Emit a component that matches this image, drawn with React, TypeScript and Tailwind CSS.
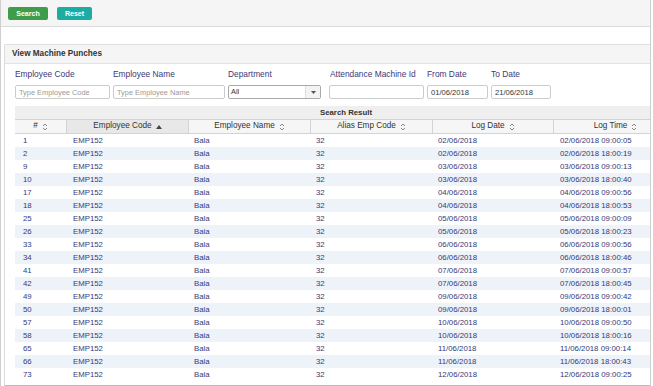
import React from 'react';

interface PunchRow {
    id: number;
    logDate: string;
    logTime: string;
}

const rows: PunchRow[] = [
    { id: 1, logDate: '02/06/2018', logTime: '09:00:05' },
    { id: 2, logDate: '02/06/2018', logTime: '18:00:19' },
    { id: 9, logDate: '03/06/2018', logTime: '09:00:13' },
    { id: 10, logDate: '03/06/2018', logTime: '18:00:40' },
    { id: 17, logDate: '04/06/2018', logTime: '09:00:56' },
    { id: 18, logDate: '04/06/2018', logTime: '18:00:53' },
    { id: 25, logDate: '05/06/2018', logTime: '09:00:09' },
    { id: 26, logDate: '05/06/2018', logTime: '18:00:23' },
    { id: 33, logDate: '06/06/2018', logTime: '09:00:56' },
    { id: 34, logDate: '06/06/2018', logTime: '18:00:46' },
    { id: 41, logDate: '07/06/2018', logTime: '09:00:57' },
    { id: 42, logDate: '07/06/2018', logTime: '18:00:45' },
    { id: 49, logDate: '09/06/2018', logTime: '09:00:42' },
    { id: 50, logDate: '09/06/2018', logTime: '18:00:01' },
    { id: 57, logDate: '10/06/2018', logTime: '09:00:50' },
    { id: 58, logDate: '10/06/2018', logTime: '18:00:16' },
    { id: 65, logDate: '11/06/2018', logTime: '09:00:14' },
    { id: 66, logDate: '11/06/2018', logTime: '18:00:43' },
    { id: 73, logDate: '12/06/2018', logTime: '09:00:25' },
];

const SortIcon = () => (
    <svg width="6" height="8" viewBox="0 0 6 8" className="ml-[4px] inline-block">
        <path d="M1 3 L3 1 L5 3" fill="none" stroke="#888" strokeWidth="1" />
        <path d="M1 5 L3 7 L5 5" fill="none" stroke="#888" strokeWidth="1" />
    </svg>
);

const SortUp = () => (
    <svg width="6" height="4" viewBox="0 0 6 4" className="ml-[4px] inline-block">
        <path d="M0 4 L3 0 L6 4 Z" fill="#444" />
    </svg>
);

const columns = [
    { label: '#', width: 'w-[51px]', sorted: false },
    { label: 'Employee Code', width: 'w-[122px]', sorted: true },
    { label: 'Employee Name', width: 'w-[122px]', sorted: false },
    { label: 'Alias Emp Code', width: 'w-[122px]', sorted: false },
    { label: 'Log Date', width: 'w-[121px]', sorted: false },
    { label: 'Log Time', width: 'w-[124px]', sorted: false },
];

const App: React.FC = () => {
    return (
        <div className="w-[653px] h-[386px] bg-white overflow-hidden font-['Liberation_Sans',Arial,sans-serif]">
            <div className="w-[651px] h-[386px] border-l border-r border-[#cfcfcf] flex flex-col">
                {/* Toolbar */}
                <div className="h-[27px] bg-[#f5f5f5] border-b border-[#dcdcdc] flex items-center gap-[9px] pl-[7px] shrink-0">
                    <button className="w-[40px] h-[13px] rounded-[2px] bg-[#3f9c4a] text-white text-[7px] font-bold leading-[13px]">
                        Search
                    </button>
                    <button className="w-[35px] h-[13px] rounded-[2px] bg-[#1daca4] text-white text-[7px] font-bold leading-[13px]">
                        Reset
                    </button>
                </div>

                <div className="h-[17px] shrink-0" />

                {/* Panel */}
                <div className="ml-[3px] flex-1 border border-r-0 border-b-[#bbb] border-[#dcdcdc] rounded-tl-[2px] flex flex-col overflow-hidden">
                    <div className="h-[19px] bg-[#f5f5f5] border-b border-[#e2e2e2] pl-[7px] flex items-center shrink-0">
                        <span className="text-[8.2px] font-bold text-[#333]">View Machine Punches</span>
                    </div>

                    <div className="pl-[10px] pt-[4px] flex-1 flex flex-col overflow-hidden">
                        {/* Filters */}
                        <div className="flex text-[8.4px] text-[#3b3a78] whitespace-nowrap">
                            <div className="w-[95px] mr-[3px]">
                                <div className="h-[13px] leading-[13px] mb-[4px]">Employee Code</div>
                                <input
                                    type="text"
                                    placeholder="Type Employee Code"
                                    className="w-full h-[14px] border border-[#cccccc] rounded-[2px] px-[3px] text-[7.4px] placeholder-[#9a9a9a] outline-none"
                                />
                            </div>
                            <div className="w-[112px] mr-[3px]">
                                <div className="h-[13px] leading-[13px] mb-[4px]">Employee Name</div>
                                <input
                                    type="text"
                                    placeholder="Type Employee Name"
                                    className="w-full h-[14px] border border-[#cccccc] rounded-[2px] px-[3px] text-[7.4px] placeholder-[#9a9a9a] outline-none"
                                />
                            </div>
                            <div className="w-[93px] mr-[8px]">
                                <div className="h-[13px] leading-[13px] mb-[4px]">Department</div>
                                <div className="w-full h-[14px] border border-[#aaaaaa] rounded-[2px] flex items-center bg-white">
                                    <span className="flex-1 pl-[2px] text-[7.4px] text-[#333]">All</span>
                                    <span className="w-[15px] h-full border-l border-[#dddddd] bg-[#f3f3f3] flex items-center justify-center">
                                        <svg width="5" height="3" viewBox="0 0 5 3">
                                            <path d="M0 0 L5 0 L2.5 3 Z" fill="#555" />
                                        </svg>
                                    </span>
                                </div>
                            </div>
                            <div className="w-[95px] mr-[3px]">
                                <div className="h-[13px] leading-[13px] mb-[4px] pl-[1px]">Attendance Machine Id</div>
                                <input
                                    type="text"
                                    className="w-full h-[14px] border border-[#cccccc] rounded-[2px] px-[3px] text-[7.4px] outline-none"
                                />
                            </div>
                            <div className="w-[61px] mr-[3px]">
                                <div className="h-[13px] leading-[13px] mb-[4px]">From Date</div>
                                <input
                                    type="text"
                                    defaultValue="01/06/2018"
                                    className="w-full h-[14px] border border-[#cccccc] rounded-[2px] px-[3px] text-[7.6px] text-[#333] outline-none"
                                />
                            </div>
                            <div className="w-[60px]">
                                <div className="h-[13px] leading-[13px] mb-[4px]">To Date</div>
                                <input
                                    type="text"
                                    defaultValue="21/06/2018"
                                    className="w-full h-[14px] border border-[#cccccc] rounded-[2px] px-[3px] text-[7.6px] text-[#333] outline-none"
                                />
                            </div>
                        </div>

                        {/* Result grid */}
                        <div className="mt-[7px] flex-1 overflow-hidden">
                            <div className="w-[662px]">
                                <div className="h-[13px] bg-[#efefef] flex items-center justify-center text-[7.8px] font-bold text-[#333]">
                                    Search Result
                                </div>
                                <div className="flex h-[15px] border-t border-b border-[#d3d3d3] bg-[#f6f6f6]">
                                    {columns.map((col, i) => (
                                        <div
                                            key={col.label}
                                            className={`${col.width} flex items-center justify-center text-[8.2px] text-[#333] ${i > 0 ? 'border-l border-[#d3d3d3]' : ''} ${col.sorted ? 'bg-[#e8e8e8]' : ''}`}
                                        >
                                            {col.label}
                                            {col.sorted ? <SortUp /> : <SortIcon />}
                                        </div>
                                    ))}
                                </div>
                                {rows.map((row, i) => (
                                    <div
                                        key={row.id}
                                        className={`flex h-[13px] items-center text-[7.8px] text-[#353a78] ${i % 2 === 1 ? 'bg-[#eef2f9]' : 'bg-white'}`}
                                    >
                                        <div className="w-[51px] pl-[8px]">{row.id}</div>
                                        <div className="w-[122px] pl-[7px]">EMP152</div>
                                        <div className="w-[122px] pl-[6px]">Bala</div>
                                        <div className="w-[122px] pl-[6px]">32</div>
                                        <div className="w-[121px] pl-[6px]">{row.logDate}</div>
                                        <div className="w-[124px] pl-[7px]">{row.logDate} {row.logTime}</div>
                                    </div>
                                ))}
                            </div>
                        </div>
                    </div>
                </div>
            </div>
        </div>
    );
};

export default App;
